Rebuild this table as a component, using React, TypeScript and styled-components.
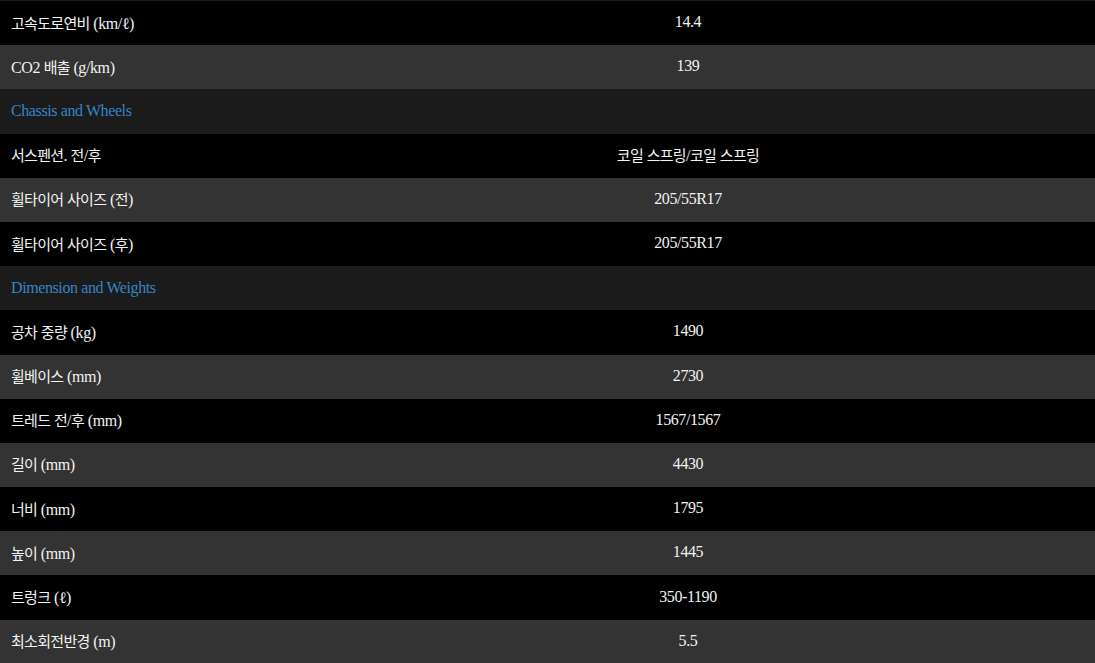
import styled, { createGlobalStyle } from "styled-components";

const GlobalStyle = createGlobalStyle`
  html, body {
    margin: 0;
    padding: 0;
    background: #000;
    overflow: hidden;
  }
`;

const Wrapper = styled.div`
  border-top: 1px solid #1b1b1b;
  font-family: "Liberation Serif", "Noto Sans CJK KR", serif;
  font-size: 16px;
  letter-spacing: -0.4px;
  color: #f2f2f2;
`;

const Table = styled.table`
  width: 100%;
  border-collapse: collapse;
  table-layout: fixed;
`;

type Tone = "black" | "gray" | "section";

const tones: Record<Tone, string> = {
  black: "#000000",
  gray: "#333333",
  section: "#1b1b1b",
};

const Row = styled.tr<{ $tone: Tone }>`
  height: 44.2px;
  background: ${(p) => tones[p.$tone]};
`;

const Label = styled.td`
  width: 270px;
  padding: 0 0 2px 11px;
  text-align: left;
  vertical-align: middle;
  white-space: nowrap;
`;

const Value = styled.td`
  padding: 0 0 2px;
  text-align: center;
  vertical-align: middle;
  white-space: nowrap;
`;

const SectionTitle = styled.td`
  padding: 0 0 0 11px;
  color: #3585c6;
  vertical-align: middle;
`;

const Hangul = styled.span`
  font-family: "Noto Sans CJK KR", sans-serif;
  font-size: 15px;
  letter-spacing: -0.7px;
`;

// hangul runs get their own smaller, tighter font
function Mixed({ text }: { text: string }) {
  const parts = text.split(/([\uAC00-\uD7A3]+)/);
  return (
    <>
      {parts.map((p, i) =>
        /[\uAC00-\uD7A3]/.test(p) ? <Hangul key={i}>{p}</Hangul> : p
      )}
    </>
  );
}

interface ISpec {
  label: string;
  value?: string;
  section?: boolean;
}

const specs: ISpec[] = [
  { label: "고속도로연비 (km/ℓ)", value: "14.4" },
  { label: "CO2 배출 (g/km)", value: "139" },
  { label: "Chassis and Wheels", section: true },
  { label: "서스펜션. 전/후", value: "코일 스프링/코일 스프링" },
  { label: "휠타이어 사이즈 (전)", value: "205/55R17" },
  { label: "휠타이어 사이즈 (후)", value: "205/55R17" },
  { label: "Dimension and Weights", section: true },
  { label: "공차 중량 (kg)", value: "1490" },
  { label: "휠베이스 (mm)", value: "2730" },
  { label: "트레드 전/후 (mm)", value: "1567/1567" },
  { label: "길이 (mm)", value: "4430" },
  { label: "너비 (mm)", value: "1795" },
  { label: "높이 (mm)", value: "1445" },
  { label: "트렁크 (ℓ)", value: "350-1190" },
  { label: "최소회전반경 (m)", value: "5.5" },
];

function App() {
  let idx = 0;
  return (
    <>
      <GlobalStyle />
      <Wrapper>
        <Table>
          <tbody>
            {specs.map((s) => {
              if (s.section) {
                idx = 0;
                return (
                  <Row key={s.label} $tone="section">
                    <SectionTitle colSpan={2}>{s.label}</SectionTitle>
                  </Row>
                );
              }
              const tone: Tone = idx % 2 === 0 ? "black" : "gray";
              idx++;
              return (
                <Row key={s.label} $tone={tone}>
                  <Label>
                    <Mixed text={s.label} />
                  </Label>
                  <Value>
                    <Mixed text={s.value ?? ""} />
                  </Value>
                </Row>
              );
            })}
          </tbody>
        </Table>
      </Wrapper>
    </>
  );
}

export default App;
